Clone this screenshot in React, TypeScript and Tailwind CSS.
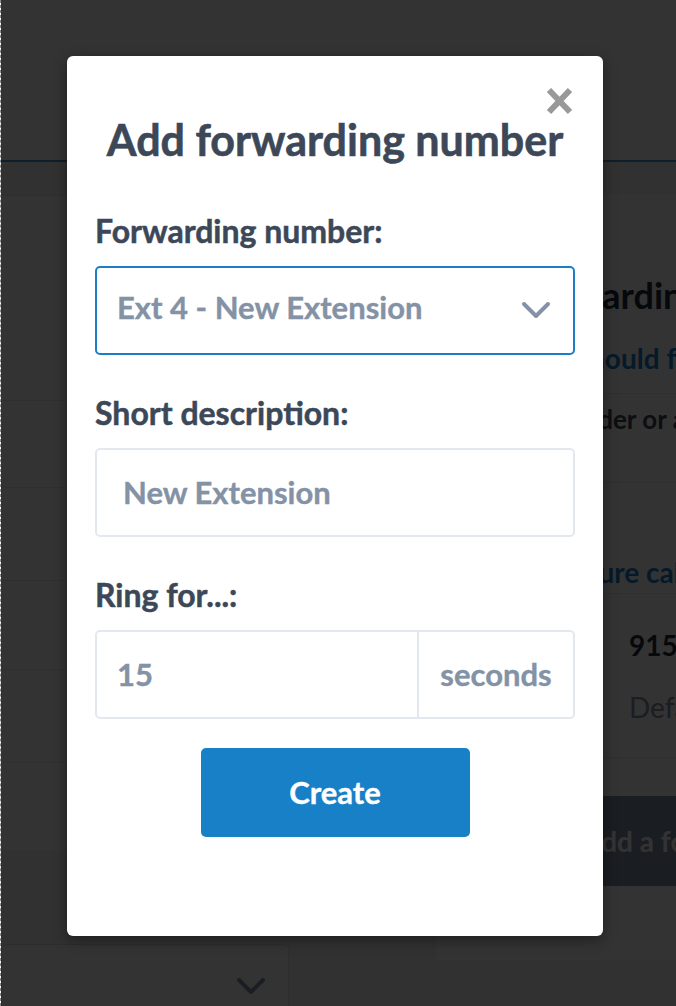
import React from "react";

const leftRows = [205, 87, 93, 89, 93, 89];

const Chevron: React.FC<{ className?: string; color?: string }> = ({
  className,
  color = "#8492a6",
}) => (
  <svg viewBox="0 0 30 18" className={className} fill="none">
    <path
      d="M3 3 L15 15 L27 3"
      stroke={color}
      strokeWidth="4"
      strokeLinecap="round"
      strokeLinejoin="round"
    />
  </svg>
);

// the page behind the dimmed overlay, mostly hidden by the modal
const BackgroundPage: React.FC = () => (
  <div className="flex h-full flex-col bg-[#f4f5f7]">
    <header className="h-[162px] shrink-0 border-b-2 border-[#4b96d8] bg-white" />

    <div className="flex flex-1 pt-[33px]">
      {/* left list */}
      <div className="flex w-[362px] shrink-0 flex-col">
        <div className="bg-white">
          {leftRows.map((h, i) => (
            <div
              key={i}
              style={{ height: h }}
              className="border-t border-[#e8e8e8]"
            />
          ))}
        </div>
        <div className="mt-[93px] flex h-[80px] w-[288px] items-start justify-end rounded-[5px] border border-[#e2e2e2] bg-white pr-[22px] pt-[32px]">
          <Chevron className="h-[18px] w-[30px]" color="#8492a6" />
        </div>
      </div>

      <div className="w-[73px] shrink-0" />

      {/* right card */}
      <div className="h-[765px] flex-1 overflow-hidden whitespace-nowrap bg-white font-bold">
        <div className="flex h-[128px] items-end pb-[8px] pl-[16px] text-[36px] leading-[40px] text-[#1f2d3d]">
          Call Forwarding
        </div>
        <div className="flex h-[70px] items-center pl-[49px] text-[28px] text-[#1a7fc7]">
          Where should forwarded calls ring?
        </div>
        <div className="flex h-[89px] items-start border-t border-[#e8e8e8] pl-[41px] pt-[6px] text-[26px] text-[#3c4858]">
          Rings in order or all at once
        </div>
        <div className="flex h-[111px] items-end border-t border-[#e8e8e8] pl-[81px] text-[28px] text-[#1a7fc7]">
          Configure call forwarding
        </div>
        <div className="flex h-[164px] flex-col justify-center border-t border-[#e8e8e8] pl-[193px]">
          <span className="text-[28px] text-[#1f2d3d]">915-555-0123</span>
          <span className="mt-[20px] text-[28px] font-normal text-[#8492a6]">
            Default
          </span>
        </div>
        <div className="border-t border-[#e8e8e8] pt-[38px]">
          <div className="flex h-[90px] items-center bg-[#8492a6] pl-[146px] text-[28px] text-white">
            Add a forwarding number
          </div>
        </div>
      </div>
    </div>
  </div>
);

const Label: React.FC<{ children: React.ReactNode }> = ({ children }) => (
  <label className="mb-[17px] block text-[32px] font-bold leading-[36px] text-[#3c4858] [-webkit-text-stroke:0.5px_#3c4858]">
    {children}
  </label>
);

const fieldText =
  "text-[31px] font-bold text-[#8492a6] [-webkit-text-stroke:0.4px_#8492a6]";

const Modal: React.FC = () => (
  <div className="relative h-[880px] w-[536px] rounded-[6px] bg-white px-[28px] pt-[60px] shadow-[0_4px_14px_rgba(0,0,0,0.4)]">
    <button className="absolute right-[30px] top-[31px] h-[28px] w-[27px]" title="Close">
      <svg viewBox="0 0 27 28" className="h-full w-full">
        <path d="M3 3 L24 25 M24 3 L3 25" stroke="#999999" strokeWidth="6" />
      </svg>
    </button>

    <h2 className="text-center text-[43px] font-bold leading-[48px] text-[#3c4858] [-webkit-text-stroke:0.6px_#3c4858]">
      Add forwarding number
    </h2>

    <div className="mt-[49px]">
      <Label>Forwarding number:</Label>
      <div className="flex h-[89px] items-center justify-between rounded-[5px] border-2 border-[#1a7fc7] pb-[6px] pl-[20px] pr-[22px]">
        <span className={fieldText}>Ext 4 - New Extension</span>
        <Chevron className="mt-[4px] h-[18px] w-[30px]" />
      </div>
    </div>

    <div className="mt-[40px]">
      <Label>Short description:</Label>
      <div className="flex h-[89px] items-center rounded-[5px] border-2 border-[#e3e8ee] pl-[26px]">
        <span className={fieldText}>New Extension</span>
      </div>
    </div>

    <div className="mt-[40px]">
      <Label>Ring for...:</Label>
      <div className="flex h-[89px] rounded-[5px] border-2 border-[#e3e8ee]">
        <div className="flex flex-1 items-center pl-[20px]">
          <span className={fieldText}>15</span>
        </div>
        <div className="flex w-[156px] items-center justify-center border-l-2 border-[#e3e8ee]">
          <span className={fieldText}>seconds</span>
        </div>
      </div>
    </div>

    <button className="mx-auto mt-[29px] flex h-[89px] w-[269px] items-center justify-center rounded-[5px] bg-[#1880c7] text-[31px] font-bold text-white [-webkit-text-stroke:0.4px_#ffffff]">
      Create
    </button>
  </div>
);

export default function App() {
  return (
    <div className="relative h-[1006px] w-full overflow-hidden border-l border-dashed border-[#8a8a8a] font-['Lato','Liberation_Sans',sans-serif]">
      <BackgroundPage />
      <div className="absolute inset-0 bg-black/80" />
      <div className="absolute inset-0 pl-[66px] pt-[56px]">
        <Modal />
      </div>
    </div>
  );
}
